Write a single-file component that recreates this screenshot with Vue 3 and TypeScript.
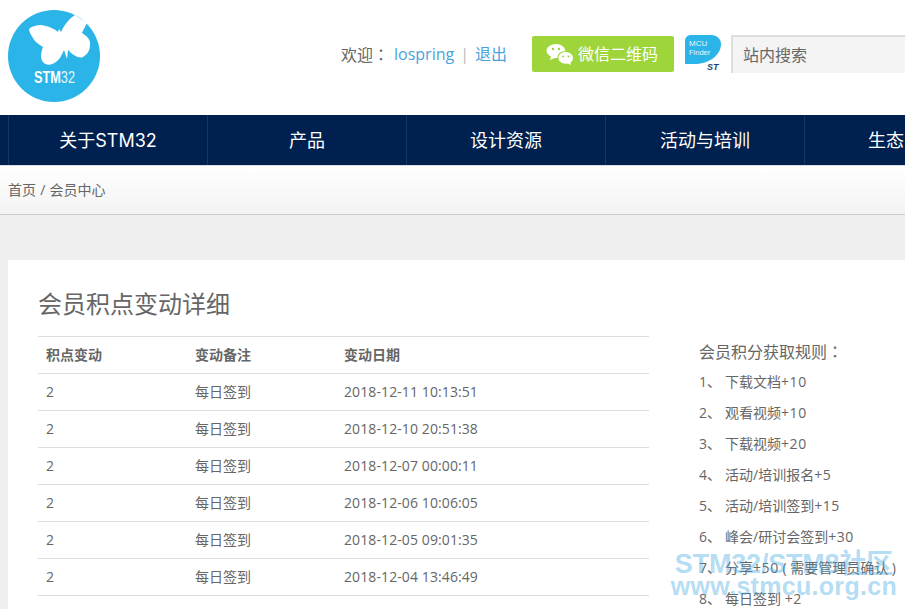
<script setup lang="ts">
interface PointRow {
  points: number
  note: string
  date: string
}

interface Rule {
  name: string
  bonus: string
  extra?: string
}

const navItems = ['关于STM32', '产品', '设计资源', '活动与培训', '生态系统']

const rows: PointRow[] = [
  { points: 2, note: '每日签到', date: '2018-12-11 10:13:51' },
  { points: 2, note: '每日签到', date: '2018-12-10 20:51:38' },
  { points: 2, note: '每日签到', date: '2018-12-07 00:00:11' },
  { points: 2, note: '每日签到', date: '2018-12-06 10:06:05' },
  { points: 2, note: '每日签到', date: '2018-12-05 09:01:35' },
  { points: 2, note: '每日签到', date: '2018-12-04 13:46:49' }
]

const rules: Rule[] = [
  { name: '下载文档', bonus: '+10' },
  { name: '观看视频', bonus: '+10' },
  { name: '下载视频', bonus: '+20' },
  { name: '活动/培训报名', bonus: '+5' },
  { name: '活动/培训签到', bonus: '+15' },
  { name: '峰会/研讨会签到', bonus: '+30' },
  { name: '分享', bonus: '+50', extra: ' ( 需要管理员确认 )' },
  { name: '每日签到 ', bonus: '+2' }
]
</script>

<template>
  <div class="page">
    <header class="header">
      <svg class="logo" width="92" height="92" viewBox="0 0 92 92">
        <circle cx="46" cy="46" r="46" fill="#2ab4e8" />
        <path
          d="M21 19 C24 16 29 15 33 15 C40 16 47 19 50 22 L51 19 L53 22 L55 18 C58 13 62 8 67 5 L79 13 C77 17 75 20 74 23 C79 26 83 30 82 35 C82 40 80 44 75 47 C71 49 65 45 60 40 L59 49 L56 40 C54 45 51 50 48 52 C44 55 38 56 35 52 C32 49 33 42 35 37 C30 34 26 31 25 28 C23 25 21 22 21 19 Z"
          fill="#fff"
        />
        <text x="26" y="73" class="logo-text" textLength="41" lengthAdjust="spacingAndGlyphs"><tspan font-weight="700">STM</tspan><tspan fill-opacity="0.9">32</tspan></text>
      </svg>

      <div class="user">
        <span class="welcome">欢迎<span class="colon">：</span></span>
        <a class="link">lospring</a>
        <span class="divider">|</span>
        <a class="link">退出</a>
      </div>

      <div class="wechat">
        <svg width="28" height="22" viewBox="0 0 28 22">
          <path d="M10 1 C15 1 19 4 19.500 8 C15 8 11 11 11.500 15 L9 15 L4 17 L5 13.500 C2 12 0.500 10 0.500 7.500 C0.500 4 5 1 10 1 Z" fill="#fff" />
          <circle cx="7" cy="6" r="1.200" fill="#9dd53a" />
          <circle cx="13" cy="6" r="1.200" fill="#9dd53a" />
          <path d="M19.500 9 C23.500 9 27 11.500 27 15 C27 17 26 18.500 24.500 19.500 L25 22 L22 20.500 C17 21.500 12.500 18.800 12.500 15 C12.500 11.500 15.500 9 19.500 9 Z" fill="#fff" />
          <circle cx="17" cy="13.500" r="1" fill="#9dd53a" />
          <circle cx="22.500" cy="13.500" r="1" fill="#9dd53a" />
        </svg>
        <span class="wechat-label">微信二维码</span>
      </div>

      <svg class="finder" width="36" height="37" viewBox="0 0 36 37">
        <path d="M0 6 C0 2 3 0 6 0 L26 0 C32 0 36 4 36 9 C36 20 24 29 10 29 L0 29 Z" fill="#2ab4e8" />
        <text x="4" y="11" class="finder-text">MCU</text>
        <text x="4" y="20" class="finder-text small">Finder</text>
        <text x="22" y="35" class="finder-st">ST</text>
      </svg>

      <div class="search">站内搜索</div>
    </header>

    <nav class="nav">
      <a v-for="item in navItems" :key="item" class="nav-item">{{ item }}</a>
    </nav>

    <div class="crumb">首页 / 会员中心</div>

    <main class="card">
      <section class="detail">
        <h1>会员积点变动详细</h1>
        <table>
          <thead>
            <tr>
              <th class="col-points">积点变动</th>
              <th class="col-note">变动备注</th>
              <th>变动日期</th>
            </tr>
          </thead>
          <tbody>
            <tr v-for="row in rows" :key="row.date">
              <td>{{ row.points }}</td>
              <td>{{ row.note }}</td>
              <td class="date">{{ row.date }}</td>
            </tr>
          </tbody>
        </table>
      </section>

      <aside class="rules">
        <p class="rules-title">会员积分获取规则<span class="colon">：</span></p>
        <p v-for="(rule, i) in rules" :key="rule.name" class="rule">
          <span class="rule-no">{{ i + 1 }}、</span>{{ rule.name }}<span class="bonus">{{ rule.bonus }}</span>{{ rule.extra }}
        </p>
      </aside>
    </main>

    <div class="watermark">
      <div class="wm-top">STM32/STM8社区</div>
      <div class="wm-bottom">www.stmcu.org.cn</div>
    </div>
  </div>
</template>

<style>
html,
body {
  margin: 0;
  overflow: hidden;
  height: 609px;
  background: #efefef;
}
</style>

<style scoped>
.page {
  position: relative;
  width: 905px;
  height: 609px;
  overflow: hidden;
  background: #efefef;
  color: #666;
  font-family: "Open Sans", "Noto Sans CJK SC", sans-serif;
  font-size: 14px;
}

.header {
  display: flex;
  align-items: flex-start;
  width: 1200px;
  height: 115px;
  padding-left: 8px;
  box-sizing: border-box;
  background: #fff;
}

.logo {
  margin-top: 10px;
  flex: none;
}

.logo-text {
  font-family: "Liberation Sans", sans-serif;
  font-size: 16px;
  fill: #fff;
}

.user {
  display: flex;
  gap: 7px;
  margin: 42px 0 0 241px;
  width: 191px;
  font-size: 16px;
  line-height: 24px;
}

.welcome {
  margin-right: -2px;
}

.colon {
  font-family: "Noto Sans CJK TC", sans-serif;
}

.link {
  color: #4ba3d9;
}

.divider {
  margin: 0 -1px;
  color: #bbb;
}

.wechat {
  display: flex;
  align-items: center;
  gap: 4px;
  width: 142px;
  height: 36px;
  margin-top: 36px;
  padding-left: 14px;
  box-sizing: border-box;
  border-radius: 2px;
  background: #9dd53a;
  color: #fff;
  font-size: 16px;
}

.wechat-label {
  margin-top: -2px;
}

.finder {
  margin: 35px 0 0 11px;
  flex: none;
}

.finder-text {
  font-family: "Liberation Sans", sans-serif;
  font-size: 8px;
  fill: #eaf7fd;
}

.finder-text.small {
  font-size: 7.5px;
}

.finder-st {
  font-family: "Liberation Sans", sans-serif;
  font-size: 9px;
  font-weight: 700;
  font-style: italic;
  fill: #1b3f73;
}

.search {
  width: 260px;
  height: 38px;
  margin: 35px 0 0 10px;
  padding-left: 10px;
  box-sizing: border-box;
  border-top: 2px solid #ddd;
  border-left: 2px solid #ddd;
  background: #f4f4f4;
  font-size: 16px;
  line-height: 36px;
}

.nav {
  display: flex;
  width: 1200px;
  height: 50px;
  padding-left: 8px;
  box-sizing: border-box;
  background: #00204f;
}

.nav-item {
  flex: none;
  width: 199px;
  box-sizing: border-box;
  border-left: 1px solid #0f3a66;
  color: #fff;
  font-family: Inter, "Noto Sans CJK SC", sans-serif;
  font-size: 18px;
  line-height: 52px;
  text-align: center;
}

.crumb {
  height: 50px;
  padding-left: 8px;
  border-top: 1px solid #ddd;
  border-bottom: 1px solid #ccc;
  box-sizing: border-box;
  background: linear-gradient(#fff, #f3f3f3);
  line-height: 47px;
  word-spacing: 0.5px;
}

.card {
  display: flex;
  width: 1000px;
  height: 400px;
  margin: 45px 0 0 8px;
  padding: 0 0 0 30px;
  box-sizing: border-box;
  background: #fff;
}

.detail {
  width: 611px;
  flex: none;
}

h1 {
  margin: 28px 0 16px;
  font-size: 24px;
  font-weight: 400;
  line-height: 32px;
}

table {
  width: 100%;
  border-collapse: collapse;
  border-top: 1px solid #ddd;
}

th,
td {
  height: 36px;
  padding: 0 8px;
  border-bottom: 1px solid #ddd;
  text-align: left;
  line-height: 20px;
}

th {
  font-weight: 700;
}

.date {
  letter-spacing: 0.1px;
}

.col-points,
.col-note {
  width: 133px;
}

.rules {
  margin: 76px 0 0 50px;
}

.rules p {
  margin: 0;
  height: 31px;
  line-height: 31px;
  white-space: pre;
}

.rules .rules-title {
  height: 30px;
  font-size: 16px;
}

.rule-no {
  display: inline-block;
  width: 26px;
}

.bonus {
  letter-spacing: 0.6px;
}

.watermark {
  position: absolute;
  right: 8px;
  top: 553px;
  font-family: "Liberation Sans", "Noto Sans CJK SC", sans-serif;
  font-weight: 700;
  color: rgba(58, 165, 224, 0.4);
  white-space: nowrap;
  text-align: center;
}

.wm-top {
  font-size: 27px;
  line-height: 23px;
  letter-spacing: -0.2px;
}

.wm-bottom {
  font-size: 25px;
  line-height: 20px;
  letter-spacing: 0.3px;
}
</style>
